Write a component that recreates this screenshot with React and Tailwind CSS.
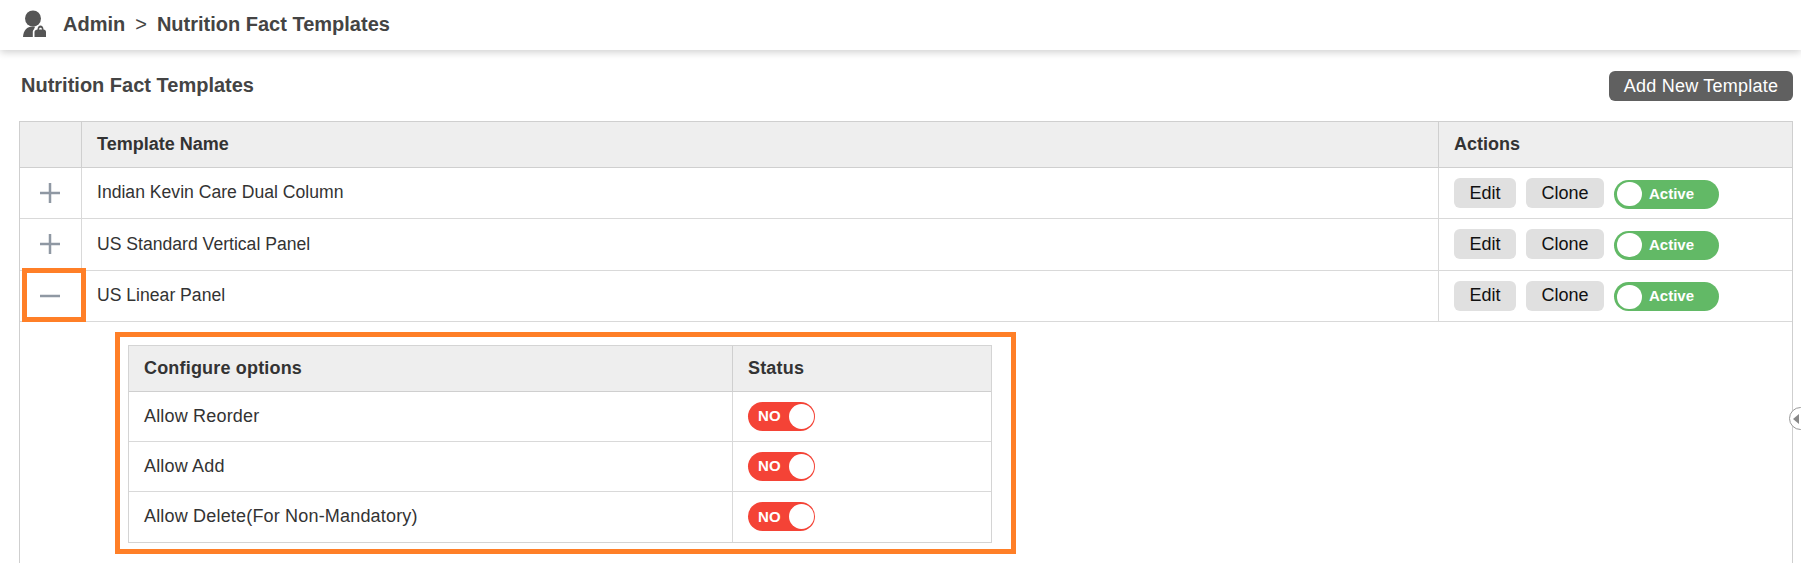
const templates = [
  { name: 'Indian Kevin Care Dual Column', open: false },
  { name: 'US Standard Vertical Panel', open: false },
  { name: 'US Linear Panel', open: true },
];

const options = ['Allow Reorder', 'Allow Add', 'Allow Delete(For Non-Mandatory)'];

function AdminIcon() {
  return (
    <svg width="24" height="28" viewBox="0 0 24 28" className="mb-[3px] shrink-0">
      <circle cx="10" cy="8.5" r="8" fill="#555" />
      <path d="M0 27 C0.5 20.5 4 16.5 9.5 16.5 C10.5 16.5 11.5 16.6 12.2 16.8 C11.5 17.8 11.2 18.6 11.1 19.2 C10.2 19.8 9.8 20.8 9.8 22 L9.8 27 Z" fill="#555" />
      <path d="M14.5 19.5 C14.5 14 20.5 14 20.5 19.5 C22 19.5 23 20.5 23 22 L23 27 L11.5 27 L11.5 22 C11.5 20.5 13 19.5 14.5 19.5 Z M16 19.5 L19 19.5 C19 17 16 17 16 19.5 Z" fill="#555" fillRule="evenodd" />
    </svg>
  );
}

function ExpandIcon({ open }) {
  return (
    <svg width="20" height="20" viewBox="0 0 20 20" className="block">
      <rect x="0" y="8.75" width="20" height="2.5" fill="#8f98a3" />
      {!open && <rect x="8.75" y="0" width="2.5" height="20" fill="#8f98a3" />}
    </svg>
  );
}

function ActionButton({ width, children }) {
  return (
    <button className={`h-[30px] rounded-md bg-[#e0e0e0] text-[18px] text-[#111] ${width}`}>
      {children}
    </button>
  );
}

function ActiveToggle() {
  return (
    <div className="mt-[2px] flex h-[29px] w-[105px] items-center rounded-full bg-[#62b966] pl-[3px]">
      <span className="h-[24px] w-[25px] rounded-full bg-white" />
      <span className="ml-[7px] text-[15px] font-bold text-white">Active</span>
    </div>
  );
}

function NoToggle() {
  return (
    <div className="flex h-[29px] w-[67px] items-center justify-between rounded-full bg-[#f44336] pl-[10px] pr-[1px]">
      <span className="text-[15px] font-bold text-white">NO</span>
      <span className="h-[25px] w-[25px] rounded-full bg-white" />
    </div>
  );
}

export default function App() {
  return (
    <div className="relative h-[563px] overflow-hidden bg-white font-['Liberation_Sans',Arial,sans-serif] text-[#333]">
      <header className="flex h-[50px] items-center gap-[16px] bg-white pl-[23px] text-[20px] font-bold text-[#444] shadow-[0_2px_8px_rgba(0,0,0,0.2)]">
        <AdminIcon />
        <div className="flex items-center gap-[10px] pb-[2px]">
          <span>Admin</span>
          <span className="font-normal">&gt;</span>
          <span>Nutrition Fact Templates</span>
        </div>
      </header>

      <div className="flex items-center justify-between pl-[21px] pr-[8px] pt-[21px]">
        <h1 className="pb-[2px] text-[20px] font-bold leading-[28px] text-[#444]">Nutrition Fact Templates</h1>
        <button className="h-[30px] w-[184px] rounded-md bg-[#606060] text-[18px] tracking-[0.25px] text-white">
          Add New Template
        </button>
      </div>

      <div className="ml-[19px] mr-[8px] mt-[20px] h-[442px] border-x border-[#cfcfcf]">
        <div className="flex h-[47px] border-y border-[#cfcfcf] bg-[#eee] text-[18px] font-bold">
          <div className="w-[62px] border-r border-[#cfcfcf]" />
          <div className="flex flex-1 items-center border-r border-[#cfcfcf] pl-[15px]">Template Name</div>
          <div className="flex w-[353px] items-center pl-[15px]">Actions</div>
        </div>

        {templates.map((t) => (
          <div key={t.name} className="flex h-[51.3px] border-b border-[#d9d9d9] text-[17.6px]">
            <div className="flex w-[62px] items-center border-r border-[#d9d9d9] pl-[20px]">
              <ExpandIcon open={t.open} />
            </div>
            <div className="flex flex-1 items-center border-r border-[#d9d9d9] pb-[1px] pl-[15px]">{t.name}</div>
            <div className="flex w-[353px] items-center gap-[10px] pl-[15px]">
              <ActionButton width="w-[62px]">Edit</ActionButton>
              <ActionButton width="w-[78px]">Clone</ActionButton>
              <ActiveToggle />
            </div>
          </div>
        ))}

        <div className="ml-[95px] mt-[10px] h-[222px] w-[901px] border-[5px] border-[#ff7f27] pl-[8px] pt-[8px]">
          <div className="w-[864px] border border-[#d4d4d4] text-[18px] tracking-[0.18px]">
            <div className="flex h-[46px] border-b border-[#cfcfcf] bg-[#eee] font-bold">
              <div className="flex w-[604px] items-center border-r border-[#cfcfcf] pl-[15px]">Configure options</div>
              <div className="flex flex-1 items-center pl-[15px]">Status</div>
            </div>
            {options.map((o, i) => (
              <div key={o} className={`flex h-[50px] ${i < 2 ? 'border-b border-[#d9d9d9]' : ''}`}>
                <div className="flex w-[604px] items-center border-r border-[#d9d9d9] pl-[15px]">{o}</div>
                <div className="flex flex-1 items-center pl-[15px]">
                  <NoToggle />
                </div>
              </div>
            ))}
          </div>
        </div>
      </div>

      {/* highlight round the collapse button */}
      <div className="absolute left-[22px] top-[268px] h-[54px] w-[64px] border-[5px] border-[#ff7f27]" />

      {/* panel handle on the right edge */}
      <div className="absolute left-[1789px] top-[407px] flex h-[23px] w-[23px] items-center rounded-full border border-[#999] bg-white pl-[3px]">
        <span className="h-0 w-0 border-y-[5px] border-r-[6px] border-y-transparent border-r-[#888]" />
      </div>
    </div>
  );
}
